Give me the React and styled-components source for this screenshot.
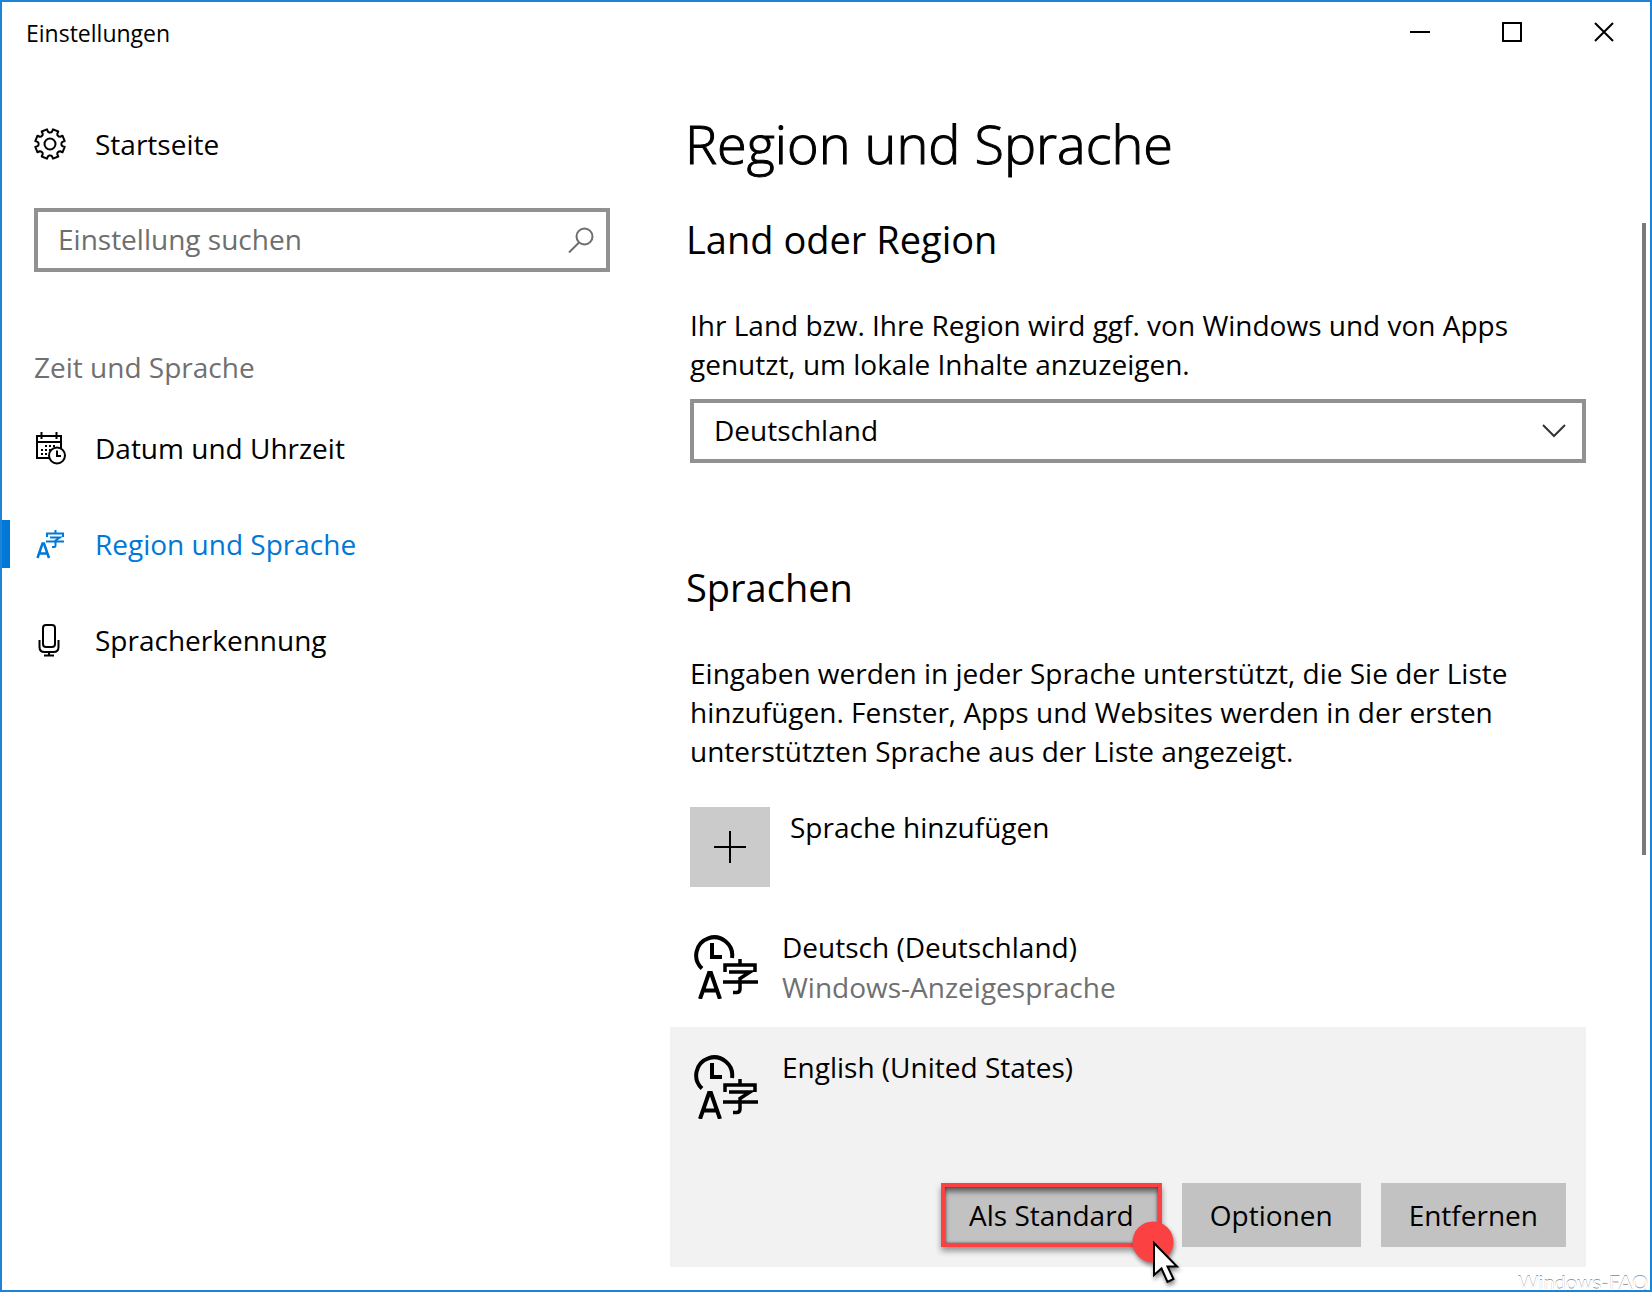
import React from 'react';
import styled, { createGlobalStyle } from 'styled-components';

const GlobalStyle = createGlobalStyle`
    *{
        box-sizing: border-box;
    }
    body{
        margin: 0;
        background: #fff;
        color: #000;
        font-family: 'Open Sans', 'Noto Sans', sans-serif;
        font-size: 28px;
        line-height: 40px;
    }
    button, input, select{
        font: inherit;
        color: inherit;
    }
`
const Window = styled.div`
    position: relative;
    display: flex;
    flex-direction: column;
    min-height: 100vh;
    border: 2px solid #1c83d8;
    overflow: hidden;
`
const TitleBar = styled.header`
    display: flex;
    justify-content: space-between;
    height: 60px;
    padding-left: 24px;
    font-size: 23px;
    line-height: 62px;
`
const CaptionButtons = styled.div`
    display: flex;
`
const CaptionButton = styled.button`
    display: flex;
    align-items: center;
    justify-content: center;
    width: 92px;
    padding: 0;
    border: 0;
    background: none;
`
const Columns = styled.div`
    flex: 1;
    display: grid;
    grid-template-columns: 668px 1fr;
`
const Sidebar = styled.nav`
    padding: 50px 60px 0 0;
`
const NavLink = styled.a`
    display: flex;
    align-items: center;
    gap: 27px;
    height: ${props => props.$home ? '64px' : '96px'};
    color: ${props => props.$active ? '#0078d7' : '#000'};
    text-decoration: none;

    &::before{
        content: '';
        width: 8px;
        height: 48px;
        margin-right: -3px;
        background: ${props => props.$active ? '#0078d7' : 'none'};
    }
    svg{
        flex-shrink: 0;
    }
`
const SearchBox = styled.form`
    display: flex;
    align-items: center;
    height: 64px;
    margin: 32px 0 0 32px;
    border: 4px solid #919191;

    input{
        flex: 1;
        min-width: 0;
        padding: 0 0 2px 20px;
        border: 0;
        outline: 0;
        background: none;
    }
    input::placeholder{
        color: #6e6e6e;
        opacity: 1;
    }
    button{
        display: flex;
        padding: 0 12px;
        border: 0;
        background: none;
    }
`
const NavTitle = styled.h3`
    margin: 75px 0 13px 32px;
    color: #707070;
    font-size: 28px;
    font-weight: 400;
`
const Main = styled.main`
    display: flex;
    flex-direction: column;
    padding-top: 45px;
`
const PageTitle = styled.h1`
    margin: 0;
    padding-left: 15px;
    font-size: 54px;
    font-weight: 300;
    line-height: 72px;
    -webkit-text-stroke: 1px #000;
`
const ScrollArea = styled.div`
    flex: 1;
    display: flex;
    padding-right: 4px;
`
const Content = styled.div`
    flex: 1;
    padding: 34px 56px 23px 0;
`
const ScrollThumb = styled.div`
    width: 4px;
    height: 632px;
    margin-top: 44px;
    background: #7a7a7a;
`
const SectionTitle = styled.h2`
    margin: 0 0 41px;
    padding-left: 16px;
    font-size: 38px;
    font-weight: 400;
    line-height: 52px;
`
const Text = styled.p`
    display: block;
    margin: 0;
    padding-left: 20px;
    line-height: 39px;
`
const SelectBox = styled.div`
    display: grid;
    align-items: center;
    height: 64px;
    margin: 15px 0 98px 20px;
    border: 4px solid #919191;

    select, svg{
        grid-area: 1 / 1;
    }
    select{
        width: 100%;
        height: 56px;
        padding: 0 60px 2px 20px;
        border: 0;
        outline: 0;
        appearance: none;
        background: none;
    }
    svg{
        justify-self: end;
        margin-right: 16px;
        pointer-events: none;
    }
`
const AddLanguage = styled.button`
    display: flex;
    gap: 20px;
    margin: 36px 0 20px 20px;
    padding: 0;
    border: 0;
    background: none;
`
const AddIcon = styled.span`
    display: flex;
    align-items: center;
    justify-content: center;
    width: 80px;
    height: 80px;
    background: #cbcbcb;
`
const LanguageList = styled.ul`
    margin: 0;
    padding: 0;
    list-style: none;
`
const LanguageItem = styled.li`
    min-height: 120px;
    padding: 20px 20px 20px 24px;
    background: ${props => props.$selected ? '#f2f2f2' : 'none'};
`
const LanguageInfo = styled.div`
    display: flex;
    gap: 24px;

    svg{
        flex-shrink: 0;
        margin-top: 8px;
    }
    small{
        display: block;
        color: #707070;
        font-size: 28px;
    }
`
const Actions = styled.div`
    display: flex;
    justify-content: flex-end;
    gap: 20px;
    margin-top: 64px;
`
const ActionSlot = styled.div`
    position: relative;
`
const ActionButton = styled.button`
    height: 64px;
    padding: 0 ${props => props.$marked ? '24px' : '28px'};
    border: ${props => props.$marked ? '4px solid #fb4141' : '0'};
    background: #c2c2c2;
    box-shadow: ${props => props.$marked ? '0 4px 6px #0006, inset 0 5px 5px #0007, inset 0 0 3px #0008' : 'none'};
`
const ClickMarker = styled.svg`
    position: absolute;
    right: -24px;
    bottom: -44px;
    overflow: visible;
    pointer-events: none;
    filter: drop-shadow(1px 3px 2px #0007);
`
const Watermark = styled.div`
    position: absolute;
    right: 2px;
    bottom: 0;
    color: #fff;
    font-family: Lato, sans-serif;
    font-size: 20px;
    line-height: 16px;
    text-shadow: 0 -1px 0 #999;
    pointer-events: none;
`

const point = (r, deg) => {
    const a = deg * Math.PI / 180
    return `${(16 + r * Math.sin(a)).toFixed(2)} ${(17 - r * Math.cos(a)).toFixed(2)}`
}

// eight teeth, with a notch at the very top
const gearPath = 'M' + [0, 1, 2, 3, 4, 5, 6, 7].map(i => {
    const c = i * 45 + 22.5
    return [point(11.5, c - 18), point(12.5, c - 13), point(15, c - 11), point(15, c + 11), point(12.5, c + 13), point(11.5, c + 18)].join('L')
}).join('L') + 'Z'

const Icon = ({ children, ...rest }) => (
    <svg width="34" height="34" viewBox="0 0 34 34" fill="none" stroke="currentColor" strokeWidth="2" aria-hidden="true" {...rest}>
        {children}
    </svg>
)

const GearIcon = () => (
    <Icon>
        <path d={gearPath} strokeLinejoin="round" />
        <circle cx="16" cy="17" r="5.5" />
    </Icon>
)

const CalendarIcon = () => (
    <Icon>
        <path d="M15 27H3V5H27V17M3 11H27M7.5 1V8M22.5 1V8" />
        <path d="M11 15H23M7 19H17M7 23H14" strokeDasharray="2 2" />
        <circle cx="23" cy="24.5" r="8" />
        <path d="M23 19.5V25H27" />
    </Icon>
)

const LanguageIcon = () => (
    <Icon strokeWidth="2.5">
        <path d="M3.5 31L8.5 16.5H10L15 31M5.5 26.5H13" />
        <path d="M21.5 3V6M13 10V6.5H29V10M16 10.5H26L21.5 13.5V18.5Q21.5 20 20 20H18M12 14.5H30" strokeWidth="2" />
    </Icon>
)

const MicIcon = () => (
    <Icon>
        <rect x="9" y="2" width="12" height="22" rx="3" />
        <path d="M5.5 17V24Q5.5 29 10.5 29H19.5Q24.5 29 24.5 24V17M15 29V32.5M10 32.5H20" />
    </Icon>
)

const ClockLanguageIcon = () => (
    <svg width="64" height="64" viewBox="0 0 64 64" fill="none" stroke="currentColor" strokeWidth="4" aria-hidden="true">
        <path d="M38 23A18 18 0 1 0 8 33.5M18 8V22H28" />
        <path d="M6 64L15 38H17L26 64M9 55.5H23" />
        <path d="M46 24V30M31 37V30H61V37M35 37H56L46 43.5V54Q46 57.5 42.5 57.5H39M29 47H64" strokeWidth="3.5" />
    </svg>
)

const navItems = [
    { label: 'Datum und Uhrzeit', icon: CalendarIcon },
    { label: 'Region und Sprache', icon: LanguageIcon, active: true },
    { label: 'Spracherkennung', icon: MicIcon },
]

function App() {
    return (
        <>
            <GlobalStyle />
            <Window>
                <TitleBar>
                    <span>Einstellungen</span>
                    <CaptionButtons>
                        <CaptionButton aria-label="Minimieren">
                            <svg width="20" height="20" stroke="#000" strokeWidth="2"><path d="M0 10H20" /></svg>
                        </CaptionButton>
                        <CaptionButton aria-label="Maximieren">
                            <svg width="20" height="20" stroke="#000" strokeWidth="2" fill="none"><path d="M1 1H19V19H1Z" /></svg>
                        </CaptionButton>
                        <CaptionButton aria-label="Schließen">
                            <svg width="20" height="20" stroke="#000" strokeWidth="2"><path d="M1 1L19 19M19 1L1 19" /></svg>
                        </CaptionButton>
                    </CaptionButtons>
                </TitleBar>
                <Columns>
                    <Sidebar>
                        <NavLink href="#" $home><GearIcon />Startseite</NavLink>
                        <SearchBox>
                            <input type="text" aria-label="Einstellung suchen" placeholder="Einstellung suchen" />
                            <button type="button" aria-label="Suchen">
                                <svg width="26" height="26" fill="none" stroke="#6e6e6e" strokeWidth="2">
                                    <circle cx="16.5" cy="9.5" r="8" />
                                    <path d="M11 15.5L1 25.5" />
                                </svg>
                            </button>
                        </SearchBox>
                        <NavTitle>Zeit und Sprache</NavTitle>
                        {navItems.map(({ label, icon: ItemIcon, active }) => (
                            <NavLink href="#" key={label} $active={active}><ItemIcon />{label}</NavLink>
                        ))}
                    </Sidebar>
                    <Main>
                        <PageTitle>Region und Sprache</PageTitle>
                        <ScrollArea>
                            <Content>
                                <SectionTitle>Land oder Region</SectionTitle>
                                <Text as="label" htmlFor="country">
                                    Ihr Land bzw. Ihre Region wird ggf. von Windows und von Apps genutzt, um lokale Inhalte anzuzeigen.
                                </Text>
                                <SelectBox>
                                    <select id="country" defaultValue="Deutschland">
                                        <option>Deutschland</option>
                                    </select>
                                    <svg width="24" height="14" fill="none" stroke="#333" strokeWidth="2"><path d="M1 1L12 12L23 1" /></svg>
                                </SelectBox>
                                <SectionTitle>Sprachen</SectionTitle>
                                <Text>
                                    Eingaben werden in jeder Sprache unterstützt, die Sie der Liste hinzufügen. Fenster, Apps und Websites werden in der ersten unterstützten Sprache aus der Liste angezeigt.
                                </Text>
                                <AddLanguage>
                                    <AddIcon>
                                        <svg width="32" height="32" stroke="#000" strokeWidth="2"><path d="M0 16H32M16 0V32" /></svg>
                                    </AddIcon>
                                    Sprache hinzufügen
                                </AddLanguage>
                                <LanguageList>
                                    <LanguageItem>
                                        <LanguageInfo>
                                            <ClockLanguageIcon />
                                            <div>
                                                Deutsch (Deutschland)
                                                <small>Windows-Anzeigesprache</small>
                                            </div>
                                        </LanguageInfo>
                                    </LanguageItem>
                                    <LanguageItem $selected>
                                        <LanguageInfo>
                                            <ClockLanguageIcon />
                                            <div>English (United States)</div>
                                        </LanguageInfo>
                                        <Actions>
                                            <ActionSlot>
                                                <ActionButton $marked>Als Standard</ActionButton>
                                                <ClickMarker width="54" height="70" aria-hidden="true">
                                                    <circle cx="21" cy="21" r="20.5" fill="#fb4141" />
                                                    <path d="M22 22V54L29.5 47.5L35.5 61L41.5 58L35.5 45.5H45Z" fill="#fff" stroke="#000" strokeWidth="2" />
                                                </ClickMarker>
                                            </ActionSlot>
                                            <ActionButton>Optionen</ActionButton>
                                            <ActionButton>Entfernen</ActionButton>
                                        </Actions>
                                    </LanguageItem>
                                </LanguageList>
                            </Content>
                            <ScrollThumb />
                        </ScrollArea>
                    </Main>
                </Columns>
                <Watermark>Windows-FAQ</Watermark>
            </Window>
        </>
    )
}

export default App;
